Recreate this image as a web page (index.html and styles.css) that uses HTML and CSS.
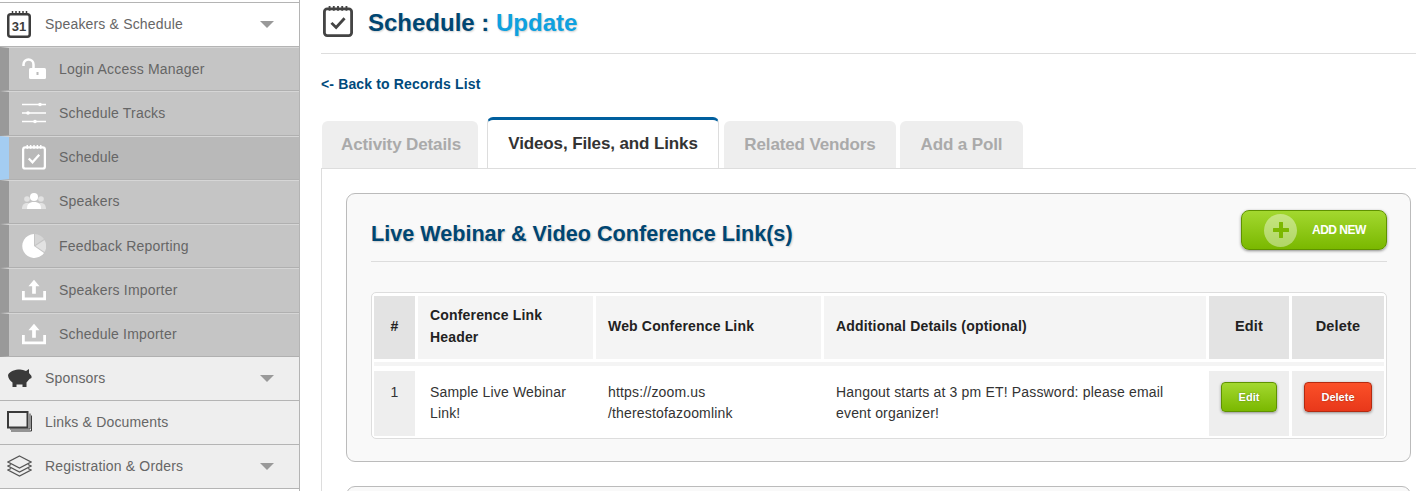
FILE: index.html
```html
<!DOCTYPE html>
<html lang="en">
<head>
<meta charset="utf-8">
<title>Schedule : Update</title>
<link rel="stylesheet" href="styles.css">
</head>
<body>
<svg class="defs" aria-hidden="true">
  <symbol id="i-upload" viewBox="0 0 26 24">
    <path d="M13 1l6 7h-4v8h-4V8H7z" fill="#fff"/>
    <path d="M1.500 13v8.500h23V13" fill="none" stroke="#fff" stroke-width="3"/>
  </symbol>
  <symbol id="i-check" viewBox="0 0 32 34">
    <rect x="1.500" y="4" width="29" height="28.500" rx="3" fill="none" stroke="currentColor" stroke-width="3"/>
    <path d="M7 1v5M11.500 1v5M16 1v5M20.500 1v5M25 1v5" stroke="currentColor" stroke-width="2"/>
    <path d="M9 19l5 5 9-10" fill="none" stroke="currentColor" stroke-width="3"/>
  </symbol>
</svg>
<div class="layout">
  <aside class="sidebar">
    <div class="nav-row nav-open">
      <span class="nav-icon">
        <svg viewBox="0 0 24 27" width="24" height="27"><rect x="1.250" y="3.250" width="21.500" height="22.500" rx="2.500" fill="none" stroke="#3d3d3d" stroke-width="2.500"/><path d="M5.500 0v4M9 0v4M12.500 0v4M16 0v4M19.500 0v4" stroke="#3d3d3d" stroke-width="1.500"/></svg>
        <b class="cal-num">31</b>
      </span>
      <span class="nav-label">Speakers &amp; Schedule</span>
      <i class="caret"></i>
    </div>
    <div class="sub-row"><svg class="sub-icon" viewBox="0 0 24 22"><path d="M1.500 8V6.500a5 5 0 0 1 10 0V10" fill="none" stroke="#fff" stroke-width="2.500"/><rect x="7" y="10" width="17" height="11" rx="1.500" fill="#fff"/><rect x="14.500" y="14" width="2" height="3" fill="#bbb"/></svg><span>Login Access Manager</span></div>
    <div class="sub-row"><svg class="sub-icon" viewBox="0 0 24 22"><path d="M0 2.500h24M0 11h24M0 19.500h24" stroke="#fff" stroke-width="1.500"/><circle cx="18" cy="2.500" r="1.800" fill="#fff"/><circle cx="6" cy="11" r="1.800" fill="#fff"/><circle cx="13" cy="19.500" r="1.800" fill="#fff"/></svg><span>Schedule Tracks</span></div>
    <div class="sub-row sub-active"><svg class="sub-icon check-white" viewBox="0 0 32 34"><use href="#i-check"/></svg><span>Schedule</span></div>
    <div class="sub-row"><svg class="sub-icon" viewBox="0 0 24 22"><circle cx="12" cy="7" r="4" fill="#fff"/><path d="M5 19c0-5 2-7 7-7s7 2 7 7z" fill="#fff"/><g fill="#fff" opacity=".5"><circle cx="5" cy="9" r="2.800"/><circle cx="19" cy="9" r="2.800"/><path d="M0 19c0-4 2-6 5-6s3 2 3 6zM16 19c0-4 0-6 3-6s5 2 5 6z"/></g></svg><span>Speakers</span></div>
    <div class="sub-row"><svg class="sub-icon" viewBox="0 0 24 26"><path d="M12 1a12 12 0 1 0 10 19L12 13z" fill="#fff"/><path d="M13 1a12 12 0 0 1 9 5l-9 6z" fill="#d6d6d6"/><path d="M13.500 13l9-6a12 12 0 0 1 0 12z" fill="#e2e2e2"/></svg><span>Feedback Reporting</span></div>
    <div class="sub-row"><svg class="sub-icon"><use href="#i-upload"/></svg><span>Speakers Importer</span></div>
    <div class="sub-row"><svg class="sub-icon"><use href="#i-upload"/></svg><span>Schedule Importer</span></div>
    <div class="nav-row">
      <span class="nav-icon"><svg viewBox="0 0 25 20" width="25" height="20"><path d="M1 7C3 3 8 1.500 13 1.500c2 0 4 .5 6 1.500l3-2v4l2.500 3v2l-2 1-3 3.500V19h-4v-2.500h-6V19h-4v-4.500C3 13 1 10 1 7z" fill="#3a3a3a"/></svg></span>
      <span class="nav-label">Sponsors</span>
      <i class="caret"></i>
    </div>
    <div class="nav-row">
      <span class="nav-icon"><svg viewBox="0 0 25 22" width="25" height="22"><rect x="1" y="1" width="19.500" height="15.500" fill="none" stroke="#3a3a3a" stroke-width="2"/><path d="M23 3v15.500H3M24.500 5v15.500H4" transform="translate(0 -.5)" fill="none" stroke="#3a3a3a" stroke-width="1"/></svg></span>
      <span class="nav-label">Links &amp; Documents</span>
    </div>
    <div class="nav-row">
      <span class="nav-icon"><svg viewBox="0 0 25 22" width="25" height="22" fill="none" stroke="#555" stroke-width="1.200"><path d="M12.500 1L24 7l-11.500 6L1 7z"/><path d="M4 9.500L1 11l11.500 6L24 11l-3-1.500"/><path d="M4 13.500L1 15l11.500 6L24 15l-3-1.500"/></svg></span>
      <span class="nav-label">Registration &amp; Orders</span>
      <i class="caret"></i>
    </div>
  </aside>
  <main class="main">
    <header class="page-head">
      <svg class="page-icon"><use href="#i-check"/></svg>
      <h1 class="page-title">Schedule : <span class="accent">Update</span></h1>
    </header>
    <a class="back-link" href="#">&lt;- Back to Records List</a>
    <nav class="tabs">
      <a class="tab tab-1" href="#">Activity Details</a>
      <a class="tab tab-active" href="#">Videos, Files, and Links</a>
      <a class="tab tab-3" href="#">Related Vendors</a>
      <a class="tab tab-4" href="#">Add a Poll</a>
    </nav>
    <section class="tab-body">
      <div class="panel">
        <div class="panel-head">
          <h2 class="panel-title">Live Webinar &amp; Video Conference Link(s)</h2>
          <a class="add-btn" href="#">
            <span class="add-circle"><svg viewBox="0 0 16 16" width="16" height="16"><path d="M8 1v14M1 8h14" stroke="#7cb800" stroke-width="4" stroke-linecap="round"/></svg></span>
            <span>ADD NEW</span>
          </a>
        </div>
        <div class="table-wrap">
          <div class="grid">
            <div class="cell th dark center">#</div>
            <div class="cell th">Conference Link Header</div>
            <div class="cell th">Web Conference Link</div>
            <div class="cell th">Additional Details (optional)</div>
            <div class="cell th dark center large">Edit</div>
            <div class="cell th dark center large">Delete</div>
            <div class="band"></div>
            <div class="cell td shade center">1</div>
            <div class="cell td">Sample Live Webinar Link!</div>
            <div class="cell td">https://zoom.us /therestofazoomlink</div>
            <div class="cell td">Hangout starts at 3 pm ET! Password: please email event organizer!</div>
            <div class="cell td shade center"><a class="btn btn-green" href="#">Edit</a></div>
            <div class="cell td shade center"><a class="btn btn-red" href="#">Delete</a></div>
          </div>
        </div>
      </div>
      <div class="panel panel-next"></div>
    </section>
  </main>
</div>
</body>
</html>
```
FILE: styles.css
```css
* { box-sizing: border-box; }
html, body { margin: 0; height: 491px; overflow: hidden; background: #fff; }
body { font-family: "Liberation Sans", Arial, sans-serif; font-size: 14px; color: #333; }
a { text-decoration: none; }
.defs { display: none; }
.layout { display: flex; height: 491px; overflow: hidden; }

/* Sidebar */
.sidebar { flex: none; width: 300px; border-right: 1px solid #b4b4b4; padding-top: 2px; }
.sidebar::before { content: ""; display: block; height: 1px; background: #b4b4b4; }
.nav-row { display: flex; align-items: center; height: 44px; padding: 0 25px 0 7px; background: #eee; border-bottom: 1px solid #b4b4b4; color: #666; }
.nav-open { background: #fff; padding-bottom: 1px; }
.nav-icon { position: relative; flex: none; display: flex; align-items: center; width: 38px; height: 27px; }
.cal-num { position: absolute; left: 0; width: 24px; top: 9px; text-align: center; font-size: 13px; line-height: 14px; color: #3d3d3d; }
.nav-label { flex: 1; letter-spacing: .17px; }
.caret { width: 0; height: 0; border: 7px solid transparent; border-top: 7px solid #999; border-bottom: 0; }
.sub-row { display: flex; align-items: center; height: 44.28px; padding: 0 0 1px 13px; background: #c5c5c5; border-left: 9px solid #999; border-top: 1px solid #d6d6d6; border-bottom: 1px solid #b0b0b0; color: #666; letter-spacing: .2px; }
.sub-icon { flex: none; width: 24px; height: 26px; margin-right: 13px; }
.sub-active { background: #b9b9b9; border-left-color: #a4cdf2; }
.check-white { color: #fff; }

/* Main */
.main { flex: 1; min-width: 0; padding-left: 21px; }
.page-head { display: flex; align-items: center; height: 54px; padding: 0 0 7px 2px; border-bottom: 1px solid #ddd; }
.page-icon { flex: none; align-self: flex-start; width: 30px; height: 32px; margin: 5px 15px 0 0; color: #444; }
.page-title { margin: 0; font-size: 24px; line-height: 34px; font-weight: bold; color: #004672; text-shadow: 1px 1px 2px rgba(0,0,0,.2); }
.accent { color: #0ea1e0; }
.back-link { display: block; margin-top: 22px; height: 17px; font-size: 14px; line-height: 17px; font-weight: bold; color: #004a7c; letter-spacing: .15px; }
.tabs { display: flex; align-items: flex-end; height: 51px; margin-top: 24px; padding-left: 1px; font-size: 17px; letter-spacing: -.12px; font-weight: bold; }
.tab { display: flex; align-items: center; justify-content: center; height: 47px; background: #eee; color: #aaa; border-radius: 6px 6px 0 0; }
.tab-1 { width: 156px; margin-right: 9px; padding-left: 2px; }
.tab-3 { width: 172px; margin-right: 4px; }
.tab-4 { width: 123px; }
.tab-active { width: 232px; height: 51px; margin-right: 5px; background: #fff; color: #333; border: 1px solid #ddd; border-top: 3px solid #005f9e; border-bottom: 0; }
.tab-body { border-left: 1px solid #ddd; border-top: 1px solid #ddd; padding: 24px 5px 0 24px; }

/* Panel */
.panel { background: #f9f9f9; border: 1px solid #bbb; border-radius: 9px; padding: 16px 23px 22px 24px; margin-bottom: 24px; }
.panel-next { height: 60px; }
.panel-head { display: flex; align-items: flex-start; justify-content: space-between; height: 52px; border-bottom: 1px solid #ddd; }
.panel-title { margin: 0; font-size: 21.6px; line-height: 48px; font-weight: bold; color: #004672; text-shadow: 1px 1px 2px rgba(0,0,0,.2); }
.add-btn { display: flex; align-items: center; width: 146px; height: 40px; padding-left: 22px; border: 1px solid #5f9200; border-radius: 8px; background: linear-gradient(#a3d82f, #7ab800); box-shadow: 0 1px 3px rgba(0,0,0,.45); color: #fff; font-size: 12px; font-weight: bold; letter-spacing: -.5px; }
.add-circle { display: flex; align-items: center; justify-content: center; width: 33px; height: 33px; margin-right: 15px; border-radius: 50%; background: rgba(255,255,255,.4); }

/* Table */
.table-wrap { margin-top: 30px; padding: 3px 2px 2px; background: #fff; border: 1px solid #ddd; border-radius: 5px; }
.grid { display: grid; grid-template-columns: 41px 175px 225px 382px 80px 92px; grid-template-rows: 63px 6px 65px; gap: 3px; }
.cell { display: flex; padding: 0 12px; letter-spacing: .17px; }
.th { align-items: center; padding-bottom: 3px; background: #f4f4f4; font-weight: bold; color: #222; line-height: 22px; }
.th.dark { background: #e3e3e3; }
.large { font-size: 14.5px; }
.center { justify-content: center; padding-left: 0; padding-right: 0; }
.band { grid-column: 1 / -1; height: 4px; background: #f4f4f4; }
.td { align-items: flex-start; padding-top: 11px; line-height: 21px; color: #333; }
.shade { background: #eee; }
.btn { display: flex; align-items: center; justify-content: center; height: 30px; margin-top: 0; border-radius: 4px; color: #fff; font-size: 11px; font-weight: bold; letter-spacing: 0; text-shadow: 0 0 2px rgba(0,0,0,.35); box-shadow: 0 1px 3px rgba(0,0,0,.4); }
.btn-green { width: 56px; background: linear-gradient(#a3d82f, #7ab800); border: 1px solid #5f9200; }
.btn-red { width: 68px; background: linear-gradient(#fb5028, #e8381a); border: 1px solid #b52a10; }
```
